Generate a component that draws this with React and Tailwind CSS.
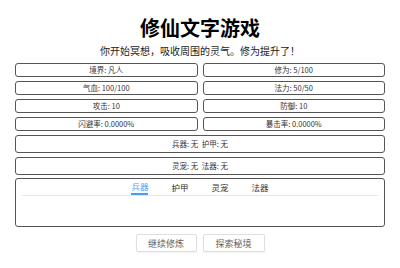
export default function App() {
  const stats = [
    ["境界: 凡人", "修为: 5/100"],
    ["气血: 100/100", "法力: 50/50"],
    ["攻击: 10", "防御: 10"],
    ["闪避率: 0.0000%", "暴击率: 0.0000%"],
  ];
  const tabs = ["兵器", "护甲", "灵宠", "法器"];

  return (
    <div className="w-[400px] h-[268px] bg-white overflow-hidden font-['Noto_Sans_CJK_SC','Noto_Sans',sans-serif] text-[#222]">
      {/* title */}
      <h1 className="text-center text-[20px] font-bold leading-[24px] pt-[16px] text-black">
        修仙文字游戏
      </h1>
      <p className="text-center text-[10px] leading-[14px] mt-[4px] text-[#222]">
        你开始冥想，吸收周围的灵气。修为提升了！
      </p>

      <div className="px-[15px]">
        {/* stat grid */}
        <div className="grid grid-cols-2 gap-x-[5px] gap-y-[4px] mt-[5px]">
          {stats.flat().map((s) => (
            <div
              key={s}
              className="h-[14px] border border-[#555] rounded-[3px] flex items-center justify-center text-[7.5px] leading-none text-[#333]"
            >
              {s}
            </div>
          ))}
        </div>

        {/* equipment */}
        <div className="mt-[4px] h-[18px] border border-[#555] rounded-[3px] flex items-center justify-center text-[7.5px] leading-none text-[#333]">
          兵器: 无&nbsp;&nbsp;护甲: 无
        </div>
        <div className="mt-[4px] h-[18px] border border-[#555] rounded-[3px] flex items-center justify-center text-[7.5px] leading-none text-[#333]">
          灵宠: 无&nbsp;&nbsp;法器: 无
        </div>

        {/* tabs */}
        <div className="mt-[3px] h-[49px] border border-[#555] rounded-[3px] px-[6px]">
          <div className="h-[17px] border-b border-[#e4e7ed] flex justify-center gap-[23px]">
            {tabs.map((t, i) => (
              <div
                key={t}
                className={`h-full flex items-center text-[8.5px] leading-none ${
                  i === 0
                    ? "text-[#409eff] border-b-2 border-[#409eff] -mb-px"
                    : "text-[#303133]"
                }`}
              >
                {t}
              </div>
            ))}
          </div>
        </div>

        {/* buttons */}
        <div className="mt-[7px] flex justify-center gap-[6px]">
          <button className="w-[61px] h-[18px] border border-[#dcdfe6] rounded-[2px] bg-white text-[9px] leading-none text-[#606266] shadow-[0_1px_2px_rgba(0,0,0,0.06)]">
            继续修炼
          </button>
          <button className="w-[62px] h-[18px] border border-[#dcdfe6] rounded-[2px] bg-white text-[9px] leading-none text-[#606266] shadow-[0_1px_2px_rgba(0,0,0,0.06)]">
            探索秘境
          </button>
        </div>
      </div>
    </div>
  );
}
